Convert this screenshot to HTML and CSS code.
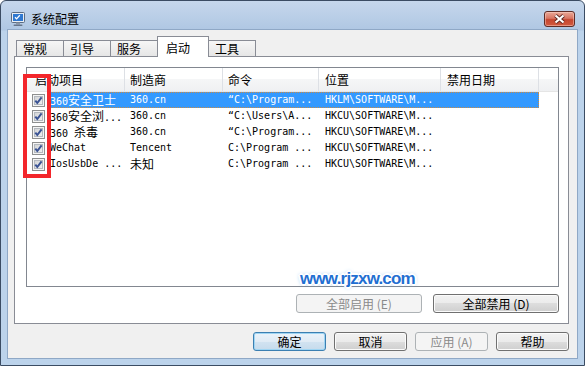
FILE: index.html
```html
<!DOCTYPE html>
<html lang="zh-CN">
<head>
    <meta charset="UTF-8">
    <title>系统配置</title>
    <link rel="stylesheet" href="styles.css">
</head>
<body>
<div class="window">
    <div class="titlebar">
        <svg class="app-icon" viewBox="0 0 16 16" width="16" height="16">
            <rect x="1.5" y="1.5" width="13" height="10" rx="1" fill="#e9eef4" stroke="#5b6c82"/>
            <rect x="3" y="3" width="10" height="7" fill="#2f78d0"/>
            <path d="M5 6.3l1.6 1.6 3.2-3.6" fill="none" stroke="#fff" stroke-width="1.3"/>
            <rect x="6" y="11.5" width="4" height="2" fill="#8b97a7"/>
            <rect x="3.5" y="13.5" width="9" height="1.6" rx=".8" fill="#66758a"/>
        </svg>
        <span class="title">系统配置</span>
        <button class="close">
            <svg viewBox="0 0 13 10" width="13" height="10">
                <path d="M2.5 1.5l8 7M10.5 1.5l-8 7" stroke="#5a2620" stroke-width="3.8" fill="none"/>
                <path d="M2.5 1.5l8 7M10.5 1.5l-8 7" stroke="#fff" stroke-width="2.2" fill="none"/>
            </svg>
        </button>
    </div>

    <div class="client">
        <div class="tabs">
            <span class="tab">常规</span>
            <span class="tab">引导</span>
            <span class="tab">服务</span>
            <span class="tab active">启动</span>
            <span class="tab">工具</span>
        </div>

        <div class="panel">
            <div class="list">
                <div class="list-head">
                    <div class="hc c1">启动项目</div>
                    <div class="hc c2">制造商</div>
                    <div class="hc c3">命令</div>
                    <div class="hc c4">位置</div>
                    <div class="hc c5">禁用日期</div>
                    <div class="hc filler"></div>
                </div>

                <div class="row selected">
                    <div class="chk"><span class="cb"><svg viewBox="0 0 11 11"><path d="M2.3 5.6l2 2.4 4.3-5.6"/></svg></span></div>
                    <div class="sel">
                        <div class="cell name">360<span class="zh">安全卫士</span></div>
                        <div class="cell c2">360.cn</div>
                        <div class="cell c3">“C:\Program...</div>
                        <div class="cell c4">HKLM\SOFTWARE\M...</div>
                        <div class="cell c5"></div>
                    </div>
                </div>
                <div class="row">
                    <div class="chk"><span class="cb"><svg viewBox="0 0 11 11"><path d="M2.3 5.6l2 2.4 4.3-5.6"/></svg></span></div>
                    <div class="sel">
                        <div class="cell name">360<span class="zh">安全浏</span>...</div>
                        <div class="cell c2">360.cn</div>
                        <div class="cell c3">“C:\Users\A...</div>
                        <div class="cell c4">HKCU\SOFTWARE\M...</div>
                        <div class="cell c5"></div>
                    </div>
                </div>
                <div class="row">
                    <div class="chk"><span class="cb"><svg viewBox="0 0 11 11"><path d="M2.3 5.6l2 2.4 4.3-5.6"/></svg></span></div>
                    <div class="sel">
                        <div class="cell name">360 <span class="zh">杀毒</span></div>
                        <div class="cell c2">360.cn</div>
                        <div class="cell c3">“C:\Program...</div>
                        <div class="cell c4">HKCU\SOFTWARE\M...</div>
                        <div class="cell c5"></div>
                    </div>
                </div>
                <div class="row">
                    <div class="chk"><span class="cb"><svg viewBox="0 0 11 11"><path d="M2.3 5.6l2 2.4 4.3-5.6"/></svg></span></div>
                    <div class="sel">
                        <div class="cell name">WeChat</div>
                        <div class="cell c2">Tencent</div>
                        <div class="cell c3">C:\Program ...</div>
                        <div class="cell c4">HKCU\SOFTWARE\M...</div>
                        <div class="cell c5"></div>
                    </div>
                </div>
                <div class="row">
                    <div class="chk"><span class="cb"><svg viewBox="0 0 11 11"><path d="M2.3 5.6l2 2.4 4.3-5.6"/></svg></span></div>
                    <div class="sel">
                        <div class="cell name">IosUsbDe ...</div>
                        <div class="cell c2"><span class="zh">未知</span></div>
                        <div class="cell c3">C:\Program ...</div>
                        <div class="cell c4">HKCU\SOFTWARE\M...</div>
                        <div class="cell c5"></div>
                    </div>
                </div>
            </div>

            <div class="panel-actions">
                <button class="btn wide" disabled>全部启用 (E)</button>
                <button class="btn wide">全部禁用 (D)</button>
            </div>

            <!-- 标注框和水印 -->
            <div class="mark"></div>
            <div class="watermark">www.rjzxw.com</div>
        </div>

        <div class="actions">
            <button class="btn default">确定</button>
            <button class="btn">取消</button>
            <button class="btn" disabled>应用 (A)</button>
            <button class="btn">帮助</button>
        </div>
    </div>
</div>
</body>
</html>
```

FILE: styles.css
```css
* {
    margin: 0;
    padding: 0;
}
body {
    font-family: "Noto Sans CJK SC", sans-serif;
    font-size: 12px;
    color: #000;
}
.window {
    position: relative;
    width: 585px;
    height: 366px;
    box-sizing: border-box;
    border: 1px solid #3b4c63;
    border-radius: 6px 6px 0 0;
    background: linear-gradient(#c6d7ec, #afc7e3 29px, #bcd3eb 30px, #bcd3eb);
    display: flex;
    flex-direction: column;
}
.titlebar {
    height: 29px;
    box-sizing: border-box;
    display: flex;
    align-items: flex-start;
    padding: 10px 9px 0 9px;
}
.app-icon {
    width: 16px;
    height: 16px;
    margin-right: 5px;
}
.title {
    line-height: 16px;
}
.close {
    margin-left: auto;
    width: 31px;
    height: 16px;
    box-sizing: border-box;
    border: 1px solid #5e2c26;
    border-radius: 3px;
    background: linear-gradient(#e9a897, #d87664 45%, #c5462f 55%, #d25a40);
    box-shadow: inset 0 0 0 1px rgba(255, 220, 210, .45);
    display: flex;
    align-items: center;
    justify-content: center;
}
.close svg {
    display: block;
}

.client {
    flex: 1;
    margin: 0 7px 7px;
    padding: 6px 8px 7px 6px;
    background: #f0f0f0;
    box-shadow: 0 0 0 1px #8fa8c6;
    display: flex;
    flex-direction: column;
}

/* 选项卡 */
.tabs {
    display: flex;
    align-items: flex-end;
    height: 20px;
    padding-left: 3px;
}
.tab {
    position: relative;
    height: 16px;
    box-sizing: border-box;
    line-height: 15px;
    padding: 0 16px 0 6px;
    margin-left: -1px;
    border: 1px solid #898c95;
    border-bottom: 0;
    background: linear-gradient(#f6f6f6, #e6e6e6);
}
.tab.active {
    height: 21px;
    margin-bottom: -1px;
    padding: 3px 18px 0 8px;
    background: #fff;
    z-index: 1;
}

.panel {
    position: relative;
    height: 268px;
    box-sizing: border-box;
    border: 1px solid #898c95;
    background: #fff;
    padding: 10px 9px 10px 11px;
    display: flex;
    flex-direction: column;
}

/* 列表 */
.list {
    height: 221px;
    box-sizing: border-box;
    border: 1px solid #828790;
    background: #fff;
}
.list-head {
    display: flex;
    height: 24px;
    box-sizing: border-box;
    border-bottom: 1px solid #e5e5e5;
    background: linear-gradient(#fff, #fff 50%, #f5f6f7 50%, #eff0f2);
}
.hc {
    box-sizing: border-box;
    line-height: 23px;
    padding-left: 5px;
    border-right: 1px solid #dde0e5;
    white-space: nowrap;
}
.hc.c1 {
    width: 98px;
    padding-left: 8px;
}
.c2 {
    width: 98px;
}
.c3 {
    width: 96px;
}
.c4 {
    width: 122px;
}
.c5 {
    width: 98px;
}
.hc.c4,
.hc.c5 {
    padding-left: 6px;
}
.hc.filler {
    flex: 1;
    border-right: 0;
}

.row {
    display: flex;
    height: 16px;
    line-height: 16px;
    font-family: "DejaVu Sans Mono", "Noto Sans CJK SC", monospace;
    font-size: 10px;
}
.chk {
    width: 23px;
    padding-left: 5px;
    box-sizing: border-box;
    display: flex;
    align-items: center;
}
.cb {
    width: 13px;
    height: 13px;
    box-sizing: border-box;
    border: 1px solid #8e8f8f;
    background: linear-gradient(135deg, #cbcdcf, #f6f6f6);
    box-shadow: inset 0 0 0 1px #f4f4f4, inset 0 0 0 2px #b4b9bf;
}
.cb svg {
    display: block;
    width: 11px;
    height: 11px;
}
.cb path {
    fill: none;
    stroke: #3a5394;
    stroke-width: 2;
}
.sel {
    display: flex;
}
.cell {
    box-sizing: border-box;
    padding-left: 5px;
    white-space: nowrap;
    overflow: hidden;
}
.cell.name {
    width: 75px;
    padding-left: 0;
}
.cell.c4 {
    padding-left: 6px;
}
.zh {
    font-family: "Noto Sans CJK SC", sans-serif;
    font-size: 12px;
}
.row.selected .sel {
    background: #3399ff;
    color: #fff;
    outline: 1px dotted #c98a45;
    outline-offset: -1px;
}

/* 按钮 */
.panel-actions {
    display: flex;
    justify-content: flex-end;
    gap: 11px;
    margin-top: 7px;
}
.actions {
    display: flex;
    justify-content: flex-end;
    gap: 8px;
    margin-top: 8px;
}
.btn {
    width: 73px;
    height: 19px;
    box-sizing: border-box;
    border: 1px solid #707070;
    border-radius: 3px;
    background: linear-gradient(#f2f2f2, #ebebeb 50%, #dddddd 50%, #cfcfcf);
    box-shadow: inset 0 0 0 1px #fbfbfb;
    font-family: "Noto Sans CJK SC", sans-serif;
    font-size: 12px;
    line-height: 17px;
    color: #000;
}
.btn.wide {
    width: 126px;
}
.btn:disabled {
    border-color: #adb2b5;
    background: #f4f4f4;
    box-shadow: none;
    color: #8a8a8a;
}
.btn.default {
    border-color: #3c7fb1;
    background: linear-gradient(#ebf3fa, #e0ebf5 50%, #d2e3f1 50%, #c6dbec);
    box-shadow: inset 0 0 0 1px #9fd5f3;
}

/* 红色标注框 */
.mark {
    position: absolute;
    left: 8px;
    top: 17px;
    width: 28px;
    height: 104px;
    box-sizing: border-box;
    border: 4px solid #f3262b;
}
.watermark {
    position: absolute;
    left: 285px;
    top: 213px;
    font-family: "Liberation Sans", sans-serif;
    font-weight: bold;
    font-size: 17px;
    line-height: 17px;
    letter-spacing: -0.8px;
    color: #1f6fd2;
    text-shadow: 1px 0 #fff, -1px 0 #fff, 0 1px #fff, 0 -1px #fff,
        1px 1px #fff, -1px -1px #fff, 1px -1px #fff, -1px 1px #fff,
        2px 0 #fff, -2px 0 #fff, 0 2px #fff, 0 -2px #fff,
        0 0 4px #4f9ae6;
}
```
